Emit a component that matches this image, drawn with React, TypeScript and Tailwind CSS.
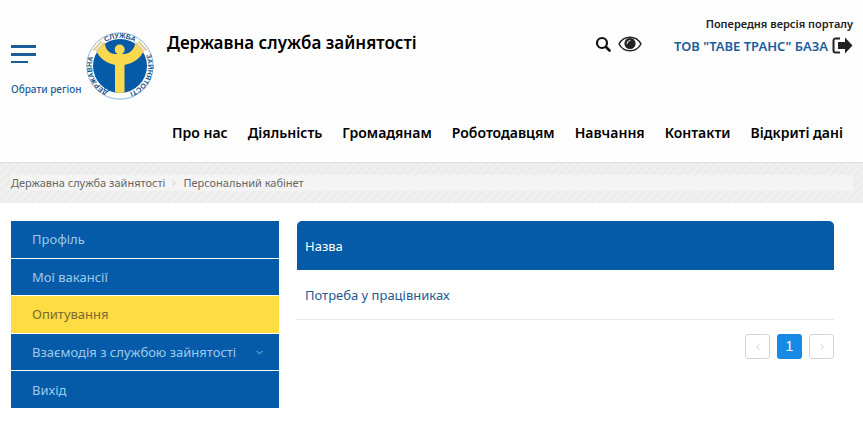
import React from "react";
import { ChevronDown, ChevronLeft, ChevronRight } from "lucide-react";

const NAV_ITEMS = ["Про нас", "Діяльність", "Громадянам", "Роботодавцям", "Навчання", "Контакти", "Відкриті дані"];

const SIDE_ITEMS = [
  { label: "Профіль" },
  { label: "Мої вакансії" },
  { label: "Опитування", active: true },
  { label: "Взаємодія з службою зайнятості", nested: true },
  { label: "Вихід" },
];

function Logo() {
  return (
    <svg viewBox="0 0 68 68" className="size-[68px]" role="img" aria-label="Державна служба зайнятості">
      <defs>
        <path id="ring-top" d="M6 34a28 28 0 0 1 56 0" />
        <path id="ring-left" d="M28 61.400A28 28 0 0 1 10 19.500" />
        <path id="ring-right" d="M58 19.500A28 28 0 0 1 40 61.400" />
        <clipPath id="disc">
          <circle cx="34" cy="34" r="27" />
        </clipPath>
      </defs>
      <circle cx="34" cy="34" r="33.2" fill="#fff" stroke="#8fb4d6" strokeWidth="1" />
      <circle cx="34" cy="34" r="27" fill="#055ba7" />
      <g clipPath="url(#disc)">
        <path
          d="M10 18L19 11C19 17 23 21.500 29 22H38C44 21.500 49 17 49 11L58 18C55 26 48 31 38.500 33V62H29V33C20 31 13 26 10 18Z"
          fill="#fbd94f"
        />
      </g>
      <circle cx="33.700" cy="17.500" r="5" fill="#fbd94f" />
      <g stroke="#dfcf8c" strokeWidth="2" strokeLinecap="round">
        <path d="M8 18l7-8M11 19l7-8M60 18l-7-8M57 19l-7-8" />
      </g>
      <g fill="#174f88" fontFamily="Liberation Sans, sans-serif" fontWeight="700" fontSize="7">
        <text textAnchor="middle">
          <textPath href="#ring-top" startOffset="50%">СЛУЖБА</textPath>
        </text>
        <text textAnchor="middle">
          <textPath href="#ring-left" startOffset="50%">ДЕРЖАВНА</textPath>
        </text>
        <text textAnchor="middle">
          <textPath href="#ring-right" startOffset="50%">ЗАЙНЯТОСТІ</textPath>
        </text>
      </g>
    </svg>
  );
}

function SearchIcon() {
  return (
    <svg viewBox="0 0 16 16" className="size-4" fill="none" stroke="#111" aria-hidden="true">
      <circle cx="7" cy="7" r="5" strokeWidth="2.200" />
      <path d="M11 11l3.500 3.500" strokeWidth="2.600" strokeLinecap="round" />
    </svg>
  );
}

function EyeIcon() {
  return (
    <svg viewBox="0 0 24 16" className="h-4 w-6" aria-hidden="true">
      <path d="M1 8C6 -1 18 -1 23 8C18 17 6 17 1 8Z" fill="#fff" stroke="#222" strokeWidth="1.500" />
      <circle cx="12" cy="7.500" r="5.600" fill="#222" />
      <path d="M9 7.500a3 3 0 0 1 3-3" fill="none" stroke="#fff" strokeWidth="1" strokeLinecap="round" />
    </svg>
  );
}

function LogoutIcon() {
  return (
    <svg viewBox="0 0 21 18" className="h-[18px] w-[21px]" aria-hidden="true">
      <path d="M8 1.500H3.500a2 2 0 0 0-2 2v10a2 2 0 0 0 2 2H8" fill="none" stroke="#222" strokeWidth="2" />
      <path d="M6 5h7V.500l7.500 8L13 16.500V12H6Z" fill="#222" />
    </svg>
  );
}

function Header() {
  return (
    <header className="border-b border-[#dcdcdc] bg-[#fefefe] pt-4 pr-[10px] pb-[18px] pl-[11px]">
      <div className="flex h-[84px] items-start">
        <div className="flex w-[75px] flex-col items-start pt-[29px]">
          <button type="button" aria-label="Меню" className="flex flex-col gap-[5px]">
            <span className="h-[3px] w-[25px] bg-[#1c5d9c]" />
            <span className="h-[3px] w-[25px] bg-[#1c5d9c]" />
            <span className="h-[2px] w-[17px] bg-[#1c5d9c]" />
          </button>
          <a href="#region" className="mt-[18px] text-[10px] leading-4 font-medium whitespace-nowrap text-[#1c5d9c]">
            Обрати регіон
          </a>
        </div>
        <a href="#home" className="pt-4">
          <Logo />
        </a>
        <h1 className="ml-[13px] pt-[15px] text-[17px] leading-6 font-semibold whitespace-nowrap text-black">
          Державна служба зайнятості
        </h1>
        <div className="ml-auto flex gap-[7px] pt-5">
          <button type="button" aria-label="Пошук"><SearchIcon /></button>
          <button type="button" aria-label="Версія для людей з порушенням зору"><EyeIcon /></button>
        </div>
        <div className="ml-8 flex flex-col items-end">
          <a href="#old" className="text-[11px] leading-4 font-semibold text-[#222]">Попередня версія порталу</a>
          <a href="#account" className="mt-[2px] flex items-center gap-1 text-[13px] leading-6 font-semibold whitespace-nowrap text-[#1c5d9c]">
            ТОВ "ТАВЕ ТРАНС" БАЗА
            <LogoutIcon />
          </a>
        </div>
      </div>
      <nav className="mt-[22px] flex h-[22px] items-center justify-end gap-5 pr-[10px]">
        {NAV_ITEMS.map((item) => (
          <a key={item} href="#nav" className="text-[14px] leading-5 font-semibold whitespace-nowrap text-black">
            {item}
          </a>
        ))}
      </nav>
    </header>
  );
}

function Breadcrumbs() {
  return (
    <div className="bg-[repeating-linear-gradient(135deg,#ececec_0px,#ececec_3px,#f0f0f0_4px,#f0f0f0_6px)] py-3 pr-[10px] pl-[11px]">
      <nav aria-label="Breadcrumb" className="flex h-4 items-center bg-[#f4f4f4] text-[11px] leading-4 text-[#666]">
        <a href="#home">Державна служба зайнятості</a>
        <ChevronRight size={10} className="mx-1 text-[#c4c4c4]" />
        <span>Персональний кабінет</span>
      </nav>
    </div>
  );
}

function Sidebar() {
  return (
    <nav aria-label="Кабінет" className="grid h-[187px] w-[268px] shrink-0 auto-rows-fr gap-px">
      {SIDE_ITEMS.map((item) => (
        <a
          key={item.label}
          href="#cabinet"
          className={`flex items-center justify-between pr-[14px] pl-[21px] text-[13px] leading-5 ${
            item.active ? "bg-[#ffdc42] text-[#7b6a33]" : "bg-[#055ba7] text-[#9fc9ec]"
          }`}
        >
          {item.label}
          {item.nested && <ChevronDown size={11} />}
        </a>
      ))}
    </nav>
  );
}

export default function App() {
  return (
    <div className="min-h-screen bg-white font-['Noto_Sans',sans-serif]">
      <Header />
      <Breadcrumbs />
      <div className="flex items-start gap-[18px] pt-[18px] pr-[29px] pl-[11px]">
        <Sidebar />
        <main className="flex-1">
          <table className="w-full border-separate border-spacing-0 text-left text-[13px] leading-5">
            <thead>
              <tr>
                <th className="h-[49px] rounded-t-[5px] bg-[#055ba7] px-2 font-normal text-white">Назва</th>
              </tr>
            </thead>
            <tbody>
              <tr>
                <td className="h-[50px] border-b border-[#e4e8e8] px-2">
                  <a href="#survey" className="text-[#245a8f]">Потреба у працівниках</a>
                </td>
              </tr>
            </tbody>
          </table>
          <div className="mt-[14px] flex justify-end gap-[7px]">
            <button type="button" aria-label="Попередня" className="flex size-[25px] items-center justify-center rounded-[3px] border border-[#d5d5d5] text-[#c4c4c4]">
              <ChevronLeft size={10} />
            </button>
            <button type="button" className="size-[25px] rounded-[3px] bg-[#168ae4] font-['Liberation_Sans',sans-serif] text-[14px] leading-[25px] text-white">
              1
            </button>
            <button type="button" aria-label="Наступна" className="flex size-[25px] items-center justify-center rounded-[3px] border border-[#d5d5d5] text-[#c4c4c4]">
              <ChevronRight size={10} />
            </button>
          </div>
        </main>
      </div>
    </div>
  );
}
